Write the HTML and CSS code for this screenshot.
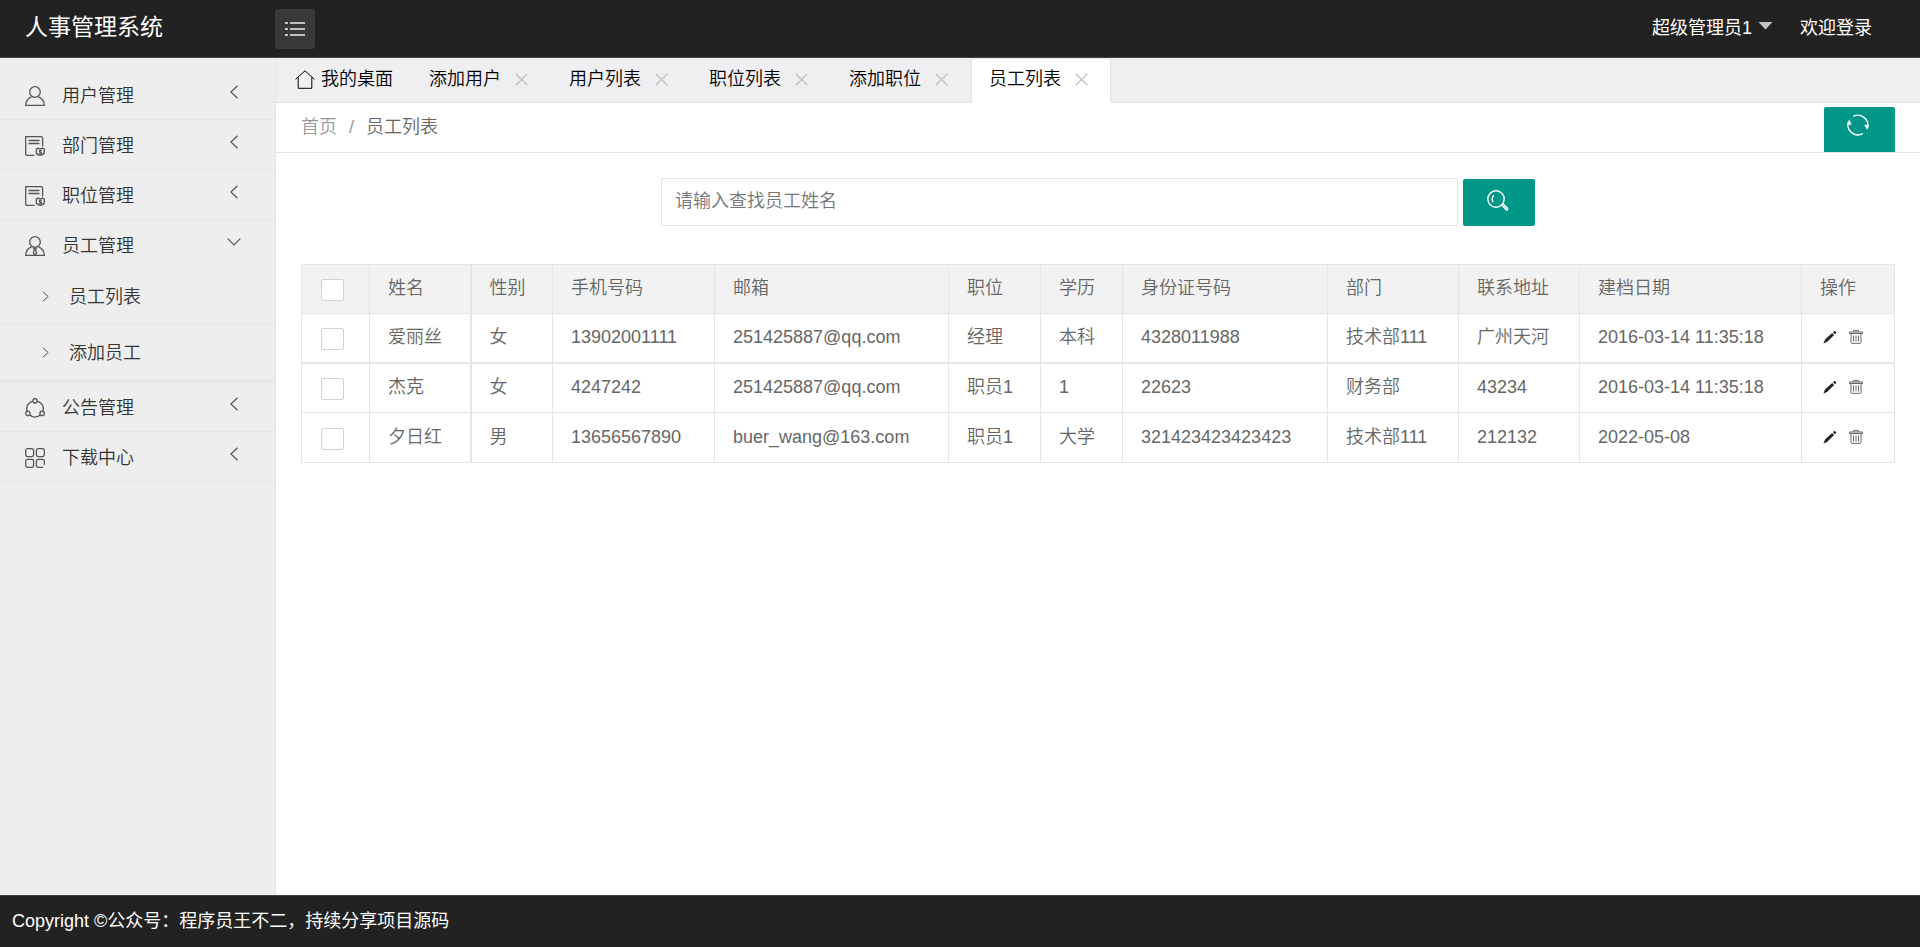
FILE: index.html
```html
<!DOCTYPE html>
<html lang="zh-CN">
<head>
<meta charset="utf-8">
<title>人事管理系统</title>
<link rel="stylesheet" href="styles.css">
</head>
<body>
<svg class="defs" aria-hidden="true">
  <symbol id="i-user" viewBox="0 0 20 20"><circle cx="10" cy="6" r="5.3"/><path d="M6.5 10.800C3 12.200.8 15 .7 19.300h18.600C19.200 15 17 12.200 13.500 10.800"/></symbol>
  <symbol id="i-doc" viewBox="0 0 20 20"><path d="M9.500 19.300H2.200Q.7 19.300.7 17.800V.7H15.800Q17.600.7 17.600 2.500V10.500M3.500 4.500h11M3.500 7.500h11"/><path d="M11.300 13q1.200 0 1.800-1 1 .8 2.200.8t2.200-.8q.6 1 1.800 1v3.500q-.5 2.200-4 2.800-3.500-.6-4-2.800zM16.700 14.400q-2.400-.3-2.400.6t1.200 1 1 1.100-2.400.3"/></symbol>
  <symbol id="i-staff" viewBox="0 0 20 20"><circle cx="10" cy="6" r="5.300"/><path d="M6.500 10.800C3 12.200.8 15 .7 19.300h18.600C19.200 15 17 12.200 13.500 10.800M8.800 12.200h2.400l-.5 1.500.9 3.400-1.600 1.800-1.600-1.800.9-3.400z"/></symbol>
  <symbol id="i-share" viewBox="0 0 20 20"><circle cx="10" cy="2.800" r="2.200"/><circle cx="2.900" cy="15.400" r="2.200"/><circle cx="17.100" cy="15.400" r="2.200"/><path d="M7.700 3.200C3 4.800.6 8.800 2 13.200M12.300 3.200C17 4.800 19.400 8.800 18 13.200M4.700 16.700C7.800 20 12.200 20 15.300 16.700"/></symbol>
  <symbol id="i-grid" viewBox="0 0 20 20"><rect x=".7" y=".7" width="7.900" height="7.900" rx="1.800"/><rect x="11.400" y=".7" width="7.900" height="7.900" rx="1.800"/><rect x=".7" y="11.400" width="7.900" height="7.900" rx="1.800"/><path d="M18 19.300h-4.800q-1.800 0-1.800-1.800v-4.300q0-1.800 1.800-1.800h4.300q1.800 0 1.800 1.800V17"/></symbol>
  <symbol id="i-left" viewBox="0 0 8 14"><path d="M7.500.7.900 7l6.600 6.300"/></symbol>
  <symbol id="i-down" viewBox="0 0 14 8"><path d="M.7.700 7 7 13.300.7"/></symbol>
  <symbol id="i-right" viewBox="0 0 7 11"><path d="M.7.700 6.200 5.500.7 10.300"/></symbol>
  <symbol id="i-close" viewBox="0 0 13 13"><path d="M.7.700l11.600 11.600M12.300.7.700 12.300"/></symbol>
  <symbol id="i-edit" viewBox="0 0 14 14"><path d="M.5 13.500l1.500-4L9.200 3l1.900 1.900L4 12zM10 2.200l1-1q.6-.5 1.200 0l.8.800q.6.600 0 1.200l-1 1z"/></symbol>
  <symbol id="i-trash" viewBox="0 0 14 14"><path d="M.5 3.500V2h13v1.500zM4.500 1.900V.6h5v1.300M2 3.600v8.600q0 1.200 1.200 1.200h7.600q1.200 0 1.200-1.200V3.600M4.500 5.500v6M7 5.500v6M9.500 5.500v6"/></symbol>
</svg>

<header class="topbar">
  <h1 class="brand">人事管理系统</h1>
  <button class="menu-btn" type="button" aria-label="展开左侧栏">
    <svg class="menu-icon" viewBox="0 0 22 14"><path d="M1 1h3M6 1h15M1 7h3M6 7h15M1 13h3M6 13h15"/></svg>
  </button>
  <nav class="account">
    <a class="account-user" href="#">超级管理员1<span class="caret"></span></a>
    <a href="#">欢迎登录</a>
  </nav>
</header>

<div class="body">
  <nav class="sidebar">
    <ul class="menu">
      <li><a href="#"><svg class="icon"><use href="#i-user"/></svg><span>用户管理</span><svg class="arrow"><use href="#i-left"/></svg></a></li>
      <li><a href="#"><svg class="icon"><use href="#i-doc"/></svg><span>部门管理</span><svg class="arrow"><use href="#i-left"/></svg></a></li>
      <li><a href="#"><svg class="icon"><use href="#i-doc"/></svg><span>职位管理</span><svg class="arrow"><use href="#i-left"/></svg></a></li>
      <li><a href="#"><svg class="icon"><use href="#i-staff"/></svg><span>员工管理</span><svg class="arrow"><use href="#i-down"/></svg></a>
        <ul class="submenu">
          <li><a href="#"><svg class="sub-arrow"><use href="#i-right"/></svg>员工列表</a></li>
          <li><a href="#"><svg class="sub-arrow"><use href="#i-right"/></svg>添加员工</a></li>
        </ul>
      </li>
      <li><a href="#"><svg class="icon"><use href="#i-share"/></svg><span>公告管理</span><svg class="arrow"><use href="#i-left"/></svg></a></li>
      <li><a href="#"><svg class="icon"><use href="#i-grid"/></svg><span>下载中心</span><svg class="arrow"><use href="#i-left"/></svg></a></li>
    </ul>
  </nav>

  <main class="page">
    <ul class="tabs">
      <li class="tab home"><svg class="home-icon" viewBox="0 0 20 19"><path d="M.6 9.300 10 .8l9.400 8.500M3.200 7.500V18.300h13.600V7.500"/></svg><a href="#">我的桌面</a></li>
      <li class="tab"><a href="#">添加用户</a><button type="button" class="close" aria-label="关闭"><svg><use href="#i-close"/></svg></button></li>
      <li class="tab"><a href="#">用户列表</a><button type="button" class="close" aria-label="关闭"><svg><use href="#i-close"/></svg></button></li>
      <li class="tab"><a href="#">职位列表</a><button type="button" class="close" aria-label="关闭"><svg><use href="#i-close"/></svg></button></li>
      <li class="tab"><a href="#">添加职位</a><button type="button" class="close" aria-label="关闭"><svg><use href="#i-close"/></svg></button></li>
      <li class="tab active"><a href="#">员工列表</a><button type="button" class="close" aria-label="关闭"><svg><use href="#i-close"/></svg></button></li>
    </ul>

    <div class="crumbs">
      <nav class="trail"><a href="#">首页</a><span class="sep">/</span><a class="current" href="#">员工列表</a></nav>
      <button class="refresh" type="button" aria-label="刷新">
        <svg class="btn-icon" viewBox="0 0 22 22"><path d="M6.200 2.400A10 10 0 0 1 20.600 13.500M15.800 19.600A10 10 0 0 1 1.400 8"/><path class="solid" d="M17.200 10.800l3 5.300 1.500-5zM.3 10.800l1.800-5.300 2.800 5z"/></svg>
      </button>
    </div>

    <form class="search">
      <input class="search-input" type="text" placeholder="请输入查找员工姓名" aria-label="请输入查找员工姓名">
      <button class="search-btn" type="button" aria-label="搜索">
        <svg class="btn-icon" viewBox="0 0 22 22"><circle cx="9" cy="9" r="8.200"/><path d="M6.800 5.200Q3.800 8.500 6.300 12.500M14.800 15l1.200-1.200 4.600 4.600q.6 2-1.400 1.400z"/></svg>
      </button>
    </form>

    <table class="grid">
      <colgroup>
        <col class="c-check"><col class="c-name"><col class="c-sex"><col class="c-phone"><col class="c-mail"><col class="c-job"><col class="c-edu"><col class="c-id"><col class="c-dept"><col class="c-addr"><col class="c-date"><col class="c-ops">
      </colgroup>
      <thead>
        <tr><th><input type="checkbox" aria-label="全选"></th><th>姓名</th><th>性别</th><th>手机号码</th><th>邮箱</th><th>职位</th><th>学历</th><th>身份证号码</th><th>部门</th><th>联系地址</th><th>建档日期</th><th>操作</th></tr>
      </thead>
      <tbody>
        <tr><td><input type="checkbox" aria-label="选择爱丽丝"></td><td>爱丽丝</td><td>女</td><td>13902001111</td><td>251425887@qq.com</td><td>经理</td><td>本科</td><td>4328011988</td><td>技术部111</td><td>广州天河</td><td>2016-03-14 11:35:18</td><td><div class="ops"><a href="#" aria-label="编辑"><svg class="edit"><use href="#i-edit"/></svg></a><a href="#" aria-label="删除"><svg class="trash"><use href="#i-trash"/></svg></a></div></td></tr>
        <tr><td><input type="checkbox" aria-label="选择杰克"></td><td>杰克</td><td>女</td><td>4247242</td><td>251425887@qq.com</td><td>职员1</td><td>1</td><td>22623</td><td>财务部</td><td>43234</td><td>2016-03-14 11:35:18</td><td><div class="ops"><a href="#" aria-label="编辑"><svg class="edit"><use href="#i-edit"/></svg></a><a href="#" aria-label="删除"><svg class="trash"><use href="#i-trash"/></svg></a></div></td></tr>
        <tr><td><input type="checkbox" aria-label="选择夕日红"></td><td>夕日红</td><td>男</td><td>13656567890</td><td>buer_wang@163.com</td><td>职员1</td><td>大学</td><td>321423423423423</td><td>技术部111</td><td>212132</td><td>2022-05-08</td><td><div class="ops"><a href="#" aria-label="编辑"><svg class="edit"><use href="#i-edit"/></svg></a><a href="#" aria-label="删除"><svg class="trash"><use href="#i-trash"/></svg></a></div></td></tr>
      </tbody>
    </table>
  </main>
</div>

<footer class="footer">Copyright ©公众号：程序员王不二，持续分享项目源码</footer>
</body>
</html>
```
FILE: styles.css
```css
* { box-sizing: border-box; }

body {
  margin: 0;
  min-height: 100vh;
  display: flex;
  flex-direction: column;
  font: 350 18px/24px "Liberation Sans", "Noto Sans CJK SC", sans-serif;
  color: #333;
  background: #fff;
}

ul { list-style: none; margin: 0; padding: 0; }
a { color: inherit; text-decoration: none; }
button { border: 0; padding: 0; font: inherit; cursor: pointer; }
svg { display: block; fill: none; stroke: currentColor; }
.defs { position: absolute; width: 0; height: 0; }

/* Top bar */
.topbar {
  display: flex;
  align-items: center;
  height: 58px;
  padding-right: 48px;
  background: #222;
  border-bottom: 1px solid #484545;
  color: #fff;
}
.brand {
  width: 275px;
  margin: 0;
  padding: 0 0 4px 25px;
  font-size: 23px;
  line-height: 32px;
  font-weight: 400;
}
.menu-btn {
  display: grid;
  place-items: center;
  width: 40px;
  height: 40px;
  border-radius: 3px;
  background: #393939;
  color: #eee;
}
.menu-icon { width: 22px; height: 14px; stroke-width: 1.5; }
.account {
  display: flex;
  gap: 27px;
  margin-left: auto;
  padding-bottom: 2px;
  font-weight: 400;
}
.account-user { display: flex; gap: 6px; }
.caret {
  margin-top: 6px;
  width: 15px;
  height: 8px;
  background: #c2c2c2;
  clip-path: polygon(0 0, 100% 0, 50% 100%);
}

.body { display: flex; flex: 1; }

/* Sidebar */
.sidebar {
  flex: 0 0 276px;
  padding-top: 12px;
  background: #eee;
  border-right: 1px solid #e5e5e5;
}
.menu > li { border-bottom: 1px solid #e5e5e5; }
.menu > li > a {
  display: flex;
  align-items: center;
  height: 49px;
  padding: 2px 34px 0 25px;
}
.icon { width: 20px; height: 20px; margin-right: 17px; stroke-width: 1.3; color: #555; }
.arrow { width: 14px; height: 14px; margin: 0 0 8px auto; color: #555; stroke-width: 1.2; }
.submenu a {
  display: flex;
  align-items: center;
  height: 56px;
  padding-left: 42px;
  border-bottom: 1px solid #e5e5e5;
}
.sub-arrow { width: 7px; height: 11px; margin-right: 20px; color: #555; }

/* Tabs */
.page { flex: 1; min-width: 0; }
.tabs {
  display: flex;
  height: 45px;
  background: #efeef0;
  border-bottom: 1px solid #e2e2e2;
  color: #000;
}
.tab {
  display: flex;
  align-items: center;
  gap: 14px;
  height: 45px;
  padding: 0 22px 3px 17px;
  border: 1px solid transparent;
}
.tab.home { gap: 6px; padding: 0 17px 3px 18px; }
.tab.active { background: #fff; border-color: #e2e2e2; border-bottom-color: #fff; border-radius: 2px 2px 0 0; }
.home-icon { width: 20px; height: 19px; }
.close { width: 13px; height: 13px; background: none; color: #c2c2c2; }
.close svg { width: 13px; height: 13px; stroke-width: 1.3; }

/* Breadcrumb */
.crumbs {
  display: flex;
  justify-content: space-between;
  align-items: flex-end;
  height: 50px;
  padding: 0 25px;
  border-bottom: 1px solid #e5e5e5;
}
.trail { align-self: center; display: flex; padding-bottom: 2px; color: #999; }
.sep { margin: 0 12px; }
.current { color: #666; }
.refresh, .search-btn { background: #009688; color: #fff; }
.refresh { width: 71px; height: 45px; padding: 0 3px 10px 0; border-radius: 2px 2px 0 0; display: grid; place-items: center; }
.btn-icon { width: 22px; height: 22px; stroke-width: 1.4; }
.solid { fill: currentColor; stroke: none; }

/* Search */
.search {
  display: flex;
  justify-content: center;
  align-items: flex-end;
  gap: 5px;
  padding: 25px 25px 0;
}
.search-input {
  width: 50%;
  height: 48px;
  padding: 0 13px 2px;
  border: 1px solid #e6e6e6;
  border-radius: 2px;
  font: inherit;
  color: #333;
}
.search-input::placeholder { color: #757575; }
.search-btn { width: 72px; height: 47px; padding: 0 2px 4px 0; border-radius: 2px; display: grid; place-items: center; }

/* Employee table */
.grid {
  width: calc(100% - 51px);
  margin: 38px 25px 0;
  table-layout: fixed;
  border-collapse: collapse;
  color: #666;
}
.grid th, .grid td {
  height: 50px;
  padding: 0 0 2px 18px;
  border: 1px solid #e5e5e5;
  text-align: left;
  font-weight: inherit;
  white-space: nowrap;
}
.grid th { height: 49px; background: #f2f2f2; }
.grid th:nth-child(2), .grid td:nth-child(2) { border-right-width: 2px; }
.grid tbody tr:first-child td { height: 49px; border-bottom-width: 2px; }
.c-check { width: 68px; }
.c-name { width: 101px; }
.c-sex, .c-edu { width: 82px; }
.c-phone { width: 162px; }
.c-mail { width: 234px; }
.c-job { width: 92px; }
.c-id { width: 205px; }
.c-dept { width: 131px; }
.c-addr { width: 121px; }
.c-date { width: 222px; }
.c-ops { width: 93px; }
.grid input {
  appearance: none;
  display: block;
  width: 23px;
  height: 22px;
  margin: 4px 0 0 1px;
  border: 1px solid #d2d2d2;
  border-radius: 2px;
  background: #fff;
}
.ops { display: flex; align-items: center; gap: 12px; padding-left: 3px; }
.ops svg { width: 14px; height: 14px; }
.edit { color: #222; }
.edit use { fill: #222; stroke: none; }

/* Footer */
.footer {
  height: 52px;
  padding: 13px 12px;
  background: #222;
  border-top: 1px solid #3c4440;
  color: #fff;
  font-weight: 400;
}
```
